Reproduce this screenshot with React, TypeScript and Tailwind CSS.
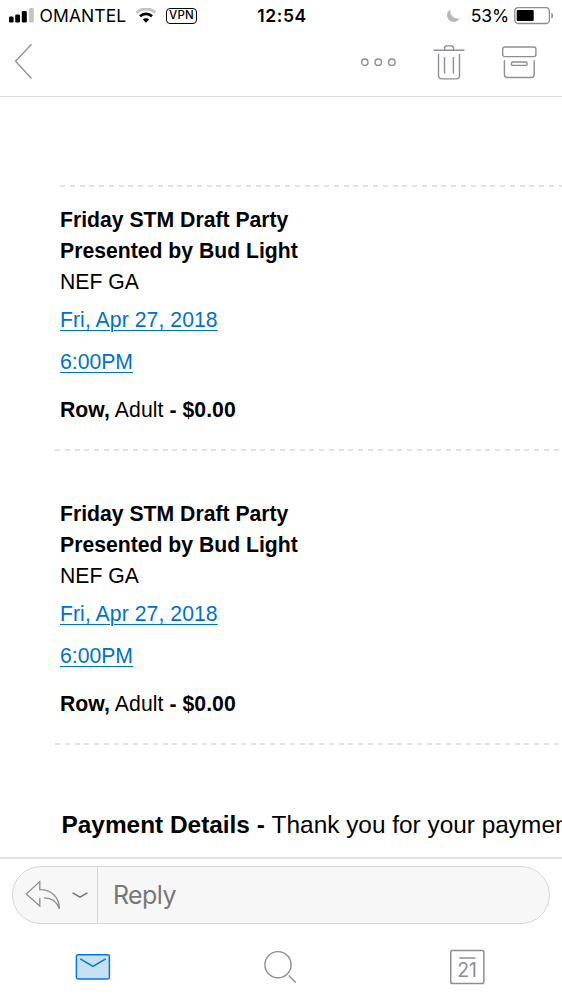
import type { ReactNode } from 'react';

interface Ticket {
  id: number;
  title: string[];
  seat: string;
  date: string;
  time: string;
  row: string;
  type: string;
  price: string;
}

const tickets: Ticket[] = [1, 2].map(id => ({
  id,
  title: ['Friday STM Draft Party', 'Presented by Bud Light'],
  seat: 'NEF GA',
  date: 'Fri, Apr 27, 2018',
  time: '6:00PM',
  row: 'Row,',
  type: 'Adult',
  price: '$0.00',
}));

function StatusBar() {
  return (
    <div className="grid h-8 grid-cols-3 items-center font-['Inter',sans-serif] text-black">
      <div className="flex items-center">
        <svg className="ml-[9px] h-4 w-[25px] shrink-0" viewBox="0 0 25 16">
          <rect x="0" y="8.6" width="4.6" height="6" rx="1.4" />
          <rect x="6.2" y="6.4" width="4.8" height="8.2" rx="1.4" />
          <rect x="12.8" y="3" width="5" height="11.6" rx="1.4" />
          <rect x="20" y="0" width="4.8" height="14.6" rx="1.4" fill="#c4c4c4" />
        </svg>
        <span className="ml-[5.5px] w-[88px] shrink-0 text-[17.5px] leading-8 tracking-[0.1px]">OMANTEL</span>
        <svg className="ml-[7.5px] h-4 w-[22px] shrink-0" viewBox="0 0 22 16" fill="none">
          <path d="M1.6 4.7C6.8-.3 15.2-.3 20.4 4.7" stroke="#c4c4c4" strokeWidth="3" />
          <path d="M5 8.2C8.4 5 13.6 5 17 8.2" stroke="#000" strokeWidth="2.8" />
          <path d="M11 14.7 7.8 11.5C9.4 9.7 12.6 9.7 14.2 11.5Z" fill="#000" />
        </svg>
        <span className="ml-[9px] flex h-4 w-[31px] shrink-0 items-center justify-center rounded-[4px] border-[1.5px] border-black text-[11.5px] font-medium leading-none tracking-[0.2px]">
          VPN
        </span>
      </div>
      <span className="pl-[2px] text-center text-[17.5px] font-semibold leading-8 tracking-[0.6px]">12:54</span>
      <div className="flex items-center justify-end pr-[8px]">
        <svg className="mr-[11px] h-[14px] w-[14px]" viewBox="0 0 14 14">
          <path d="M4.7.2A6.7 6.7 0 1 0 13.8 9 7 7 0 0 1 4.7.2Z" fill="#b8b8b8" />
        </svg>
        <span className="text-[17.5px] leading-8 tracking-[-0.1px]">53%</span>
        <svg className="ml-[5px] h-[18px] w-[40px]" viewBox="0 0 40 18">
          <rect x="0.8" y="0.5" width="34.6" height="16" rx="3.6" fill="none" stroke="#8e8e8e" strokeWidth="1.3" />
          <rect x="2.7" y="2.9" width="17" height="11.2" rx="1" />
          <path d="M37.3 5.7v5.8c2.4-.8 2.4-5 0-5.8Z" fill="#8e8e8e" />
        </svg>
      </div>
    </div>
  );
}

function Toolbar() {
  return (
    <header className="flex h-[65px] items-start border-b border-[#dcdcdc] text-[#8e8e93]">
      <button aria-label="Back" className="ml-[14px] mt-[11px]">
        <svg className="h-[37px] w-[19px]" viewBox="0 0 19 37" fill="none" stroke="currentColor" strokeWidth="1.3">
          <path d="M17.5 1.3 1.5 18.3l16 17.2" />
        </svg>
      </button>
      <button aria-label="More" className="ml-auto mr-[36px] mt-[25px]">
        <svg className="h-[10px] w-[37px]" viewBox="0 0 37 10" fill="none" stroke="currentColor" strokeWidth="1.4">
          <circle cx="4.8" cy="5.2" r="3.2" />
          <circle cx="18.3" cy="5.2" r="3.2" />
          <circle cx="31.8" cy="5.2" r="3.2" />
        </svg>
      </button>
      <button aria-label="Delete" className="mr-[37px] mt-[12px]">
        <svg className="h-[37px] w-[32px]" viewBox="0 0 32 37" fill="none" stroke="currentColor" strokeWidth="1.4">
          <path d="M.5 6.2h31M11.5 6V4.2c0-1.5.8-2.3 2.3-2.3h4.4c1.5 0 2.3.8 2.3 2.3V6M5.5 10v21.5c0 2.4 1 3.4 3.3 3.4h14.4c2.3 0 3.3-1 3.3-3.4V10M11.5 13v16.5M20.4 13v16.5" />
        </svg>
      </button>
      <button aria-label="Archive" className="mr-[25px] mt-[14px]">
        <svg className="h-[33px] w-[35px]" viewBox="0 0 35 33" fill="none" stroke="currentColor" strokeWidth="1.4">
          <rect x="0.7" y="1" width="33.2" height="9.6" rx="2" />
          <path d="M2.4 14.2v14.3c0 2 1 3 3 3h23.8c2 0 3-1 3-3V14.2" />
          <rect x="9.5" y="16" width="15.5" height="3.4" rx="1" />
        </svg>
      </button>
    </header>
  );
}

function Divider({ className }: { className: string }) {
  return (
    <div className={`h-[2px] bg-[repeating-linear-gradient(90deg,#e2e2e2_0,#e2e2e2_5px,transparent_5px,transparent_9.78px)] ${className}`} />
  );
}

function MailLink({ children, className }: { children: ReactNode; className: string }) {
  return (
    <div className={className}>
      <a href="#" className="text-[#0072c6] underline decoration-[1.3px] underline-offset-[2.5px]">{children}</a>
    </div>
  );
}

function TicketBlock({ ticket, className }: { ticket: Ticket; className: string }) {
  return (
    <section className={`pl-[60px] text-[21.2px] leading-[31px] ${className}`}>
      {ticket.title.map(line => (
        <p key={line} className="font-bold">{line}</p>
      ))}
      <p>{ticket.seat}</p>
      <MailLink className="mt-[7px] tracking-[0.06px]">{ticket.date}</MailLink>
      <MailLink className="mt-[11px]">{ticket.time}</MailLink>
      <p className="mt-[17px] tracking-[0.06px]">
        <b>{ticket.row}</b> {ticket.type} <b>- {ticket.price}</b>
      </p>
    </section>
  );
}

function ReplyBar() {
  return (
    <div className="border-t-2 border-[#e2e2e2] px-[12px] pt-[7px]">
      <div className="flex h-[58px] items-center rounded-full border border-[#d6d6d6] bg-[#f7f7f7]">
        <div className="flex h-full w-[85px] shrink-0 items-center border-r border-[#d6d6d6] text-[#8e8e93]">
          <svg className="ml-[12px] h-[30px] w-[36px]" viewBox="0 0 36 30" fill="none" stroke="currentColor" strokeWidth="1.3">
            <path d="M14.8 17.8v8.3L1.2 13.9 14.8 1.6v8c11.5 0 19.4 7.2 19.7 19.2-2.9-8-8-11.2-15.5-11" />
          </svg>
          <svg className="ml-[10px] h-[8px] w-[18px]" viewBox="0 0 18 8" fill="none" stroke="#737373" strokeWidth="1.4">
            <path d="M1.5 1.8 9 6.2l7.5-4.4" />
          </svg>
        </div>
        <span className="ml-[15px] pt-[2px] font-['Inter',sans-serif] text-[25px] tracking-[-0.6px] text-[#777]">Reply</span>
      </div>
    </div>
  );
}

function TabBar() {
  return (
    <nav className="flex h-[76px] items-start text-[#8e8e93]">
      <svg className="ml-[75px] mt-[29px] h-[28px] w-[36px]" viewBox="0 0 36 28" fill="none" stroke="#0078d7" strokeWidth="1.5">
        <rect x="1.4" y="1.8" width="33" height="24.2" rx="1.7" fill="#c7e0f4" />
        <path d="M5.3 5.8 18 13.4l12.7-7.6" />
      </svg>
      <svg className="ml-[152px] mt-[26px] h-[34px] w-[34px]" viewBox="0 0 34 34" fill="none" stroke="currentColor" strokeWidth="1.4">
        <circle cx="15" cy="14.7" r="13.1" />
        <path d="m25.7 25.5 7 7" />
      </svg>
      <svg className="ml-[152px] mt-[25px] h-[36px] w-[37px]" viewBox="0 0 37 36" fill="none" stroke="currentColor" strokeWidth="1.5">
        <rect x="1.7" y="1.5" width="33.2" height="33" rx="1.8" />
        <path d="M10.3 9h16.2" />
        <text x="18.1" y="27.6" textAnchor="middle" className="fill-[#8e8e93] stroke-none font-['Inter',sans-serif] text-[19.5px]">21</text>
      </svg>
    </nav>
  );
}

export default function App() {
  return (
    <div className="flex h-[1000px] w-[562px] flex-col overflow-hidden bg-white">
      <StatusBar />
      <Toolbar />
      <main className="h-[760px] shrink-0 overflow-hidden font-['Liberation_Sans',Arial,sans-serif] text-black">
        <Divider className="ml-[60px] mt-[88px]" />
        {tickets.map((ticket, i) => (
          <div key={ticket.id}>
            <TicketBlock ticket={ticket} className={i === 0 ? 'pt-[17px]' : 'pt-[47px]'} />
            <Divider className="ml-[55px] mr-[3px] mt-[24px]" />
          </div>
        ))}
        <p className="ml-[61.5px] mt-[62px] whitespace-nowrap text-[24.4px] leading-[36px]">
          <b>Payment Details - </b>Thank you for your payment
        </p>
      </main>
      <ReplyBar />
      <TabBar />
    </div>
  );
}
